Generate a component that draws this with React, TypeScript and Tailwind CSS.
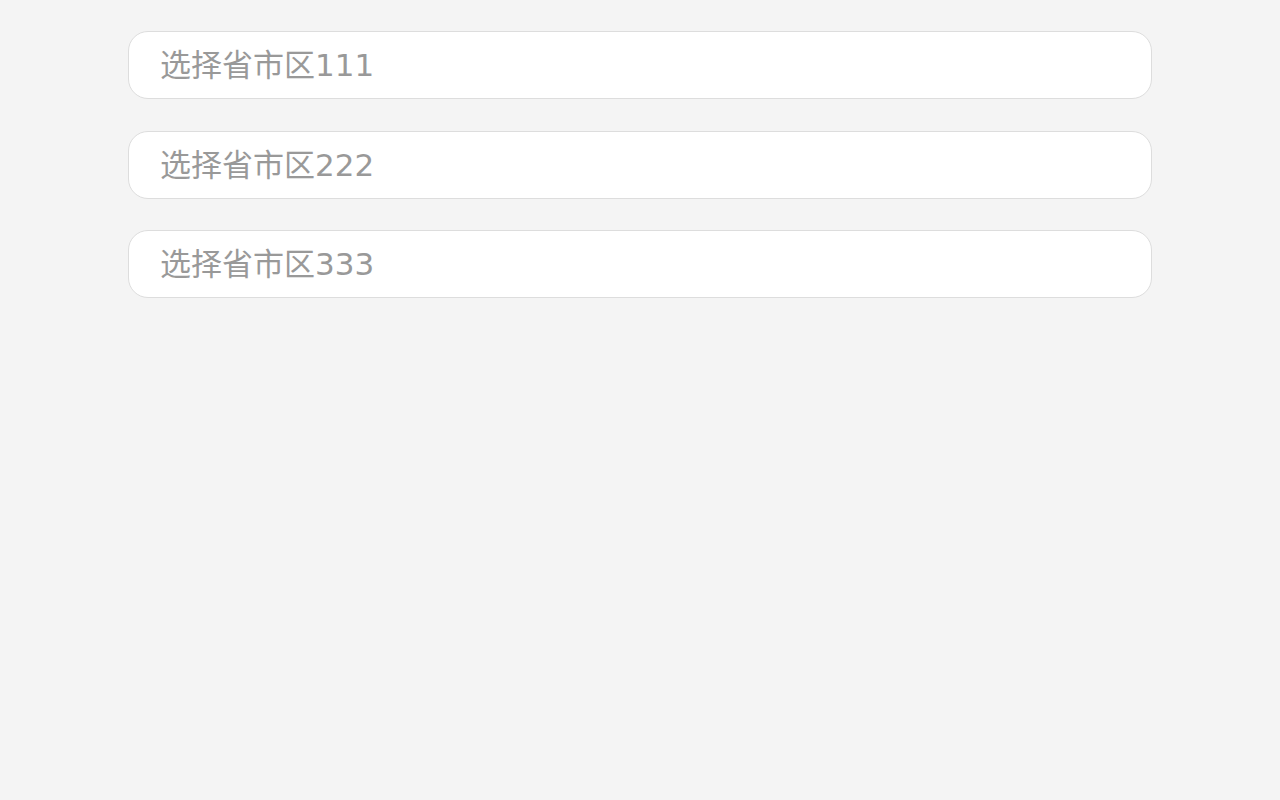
export default function App() {
  const items = ['选择省市区111', '选择省市区222', '选择省市区333'];
  return (
    <div className="min-h-[800px] bg-[#f4f4f4] pt-[31px]" style={{ fontFamily: '"DejaVu Sans", "Noto Sans CJK SC", sans-serif' }}>
      <div className="mx-auto flex w-[1024px] flex-col gap-[31.5px]">
        {items.map(label => (
          <div
            key={label}
            className="flex h-[68px] items-center rounded-[20px] border border-[#dddddd] bg-white pl-[31px] pt-[1px] text-[31px] leading-none text-[#999999]"
          >
            {label}
          </div>
        ))}
      </div>
    </div>
  );
}
